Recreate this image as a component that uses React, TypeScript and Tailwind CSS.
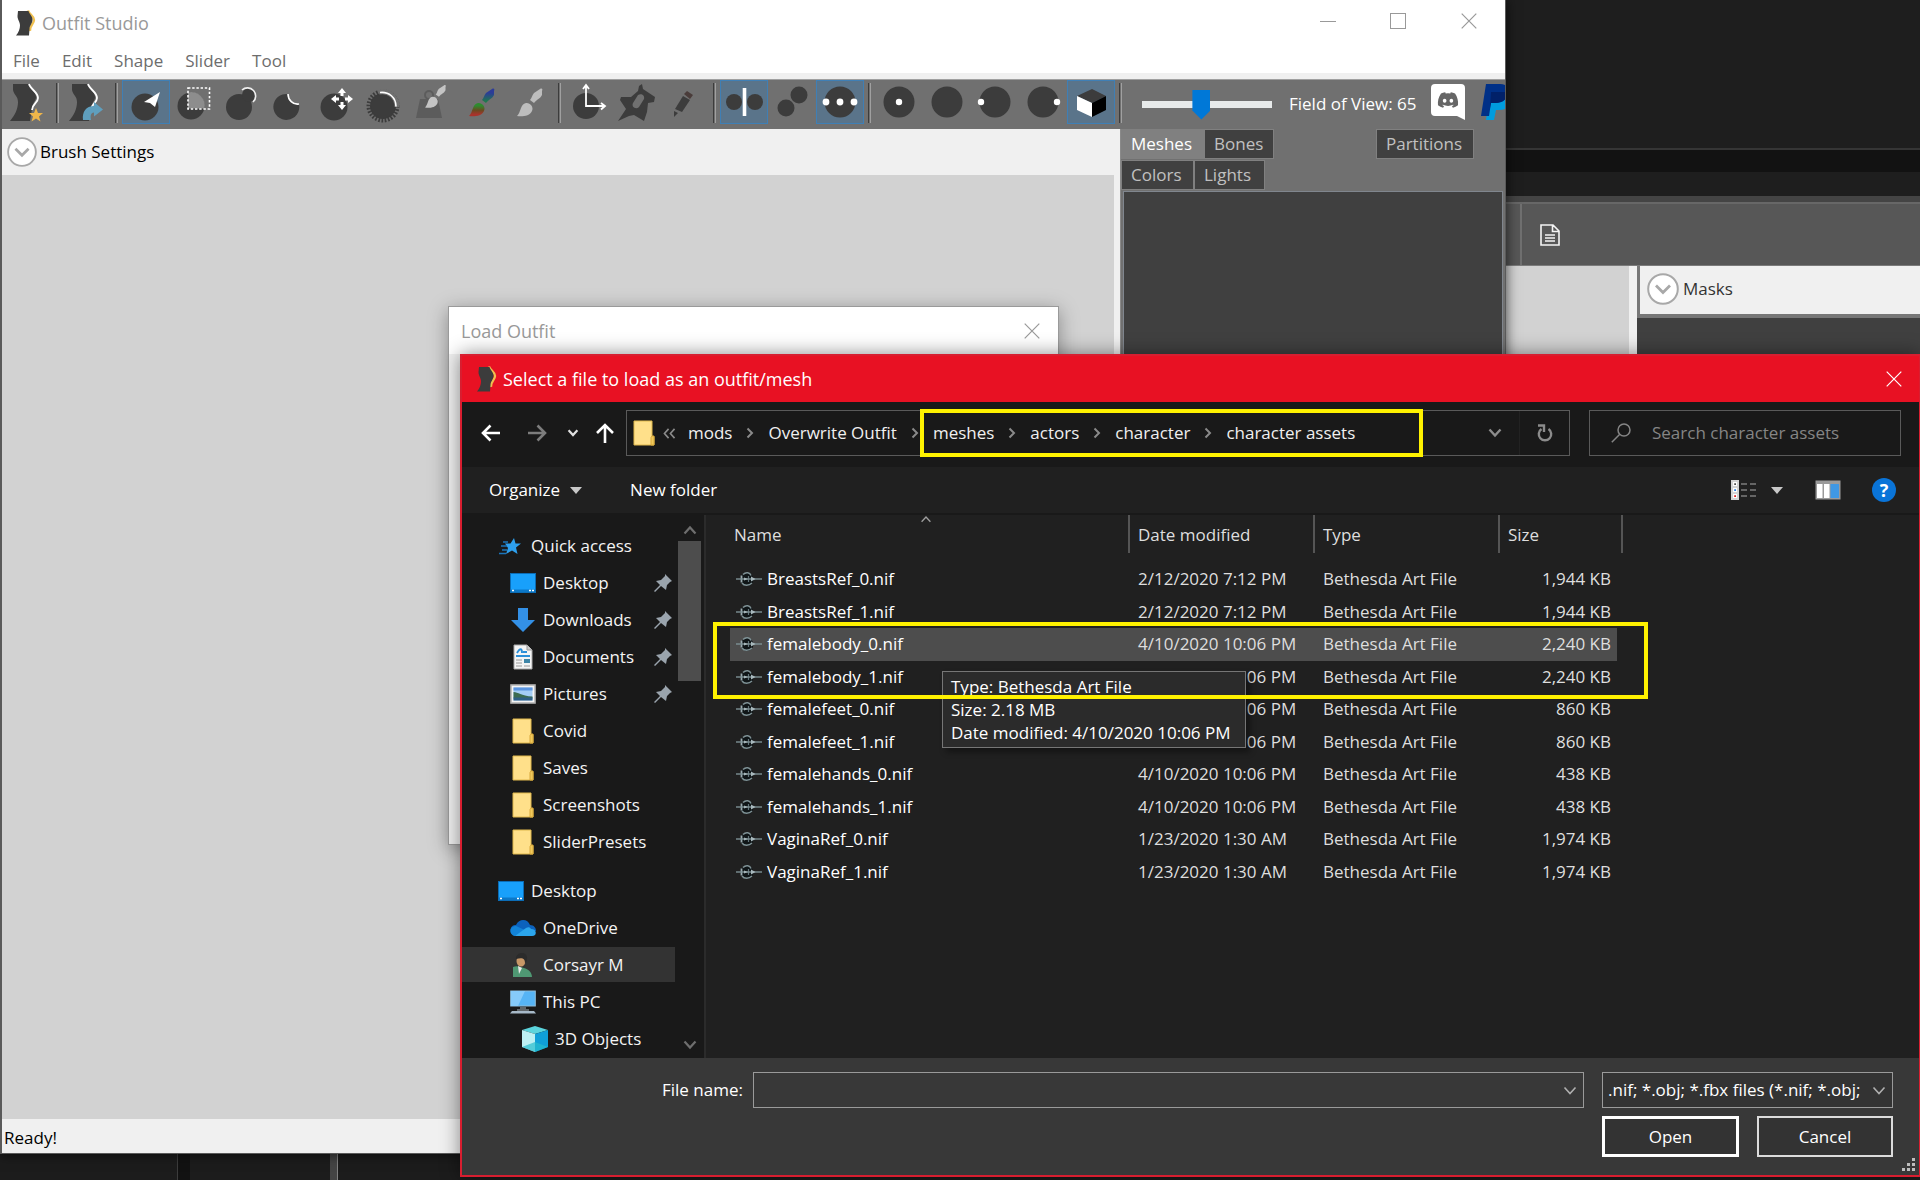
import type { ReactNode } from "react";
import { FaDiscord } from "react-icons/fa";

type IconProps = { className?: string };

/* ---------- shared glyphs ---------- */

function Chevron({ className = "" }: IconProps) {
  return (
    <svg viewBox="0 0 14 10" className={className} fill="none" stroke="currentColor">
      <path d="M1.5 1.5 7 7.5l5.5-6" />
    </svg>
  );
}

function CrumbArrow() {
  return (
    <svg viewBox="0 0 8 12" className="h-3 w-9 text-[#8a8a8a]" fill="none" stroke="currentColor" strokeWidth="2">
      <path d="M1.5 1.5 6 6l-4.5 4.5" />
    </svg>
  );
}

function CloseGlyph() {
  return (
    <svg viewBox="0 0 16 16" className="h-4 w-4" fill="none" stroke="currentColor" strokeWidth="1.2">
      <path d="M.7.7l14.6 14.6M15.3.7.7 15.3" />
    </svg>
  );
}

function BodyLogo() {
  return (
    <svg viewBox="0 0 20 26" className="h-[26px] w-5">
      <path d="M12 .5c1 4 6 5.500 6 9.500s-5 6-4 11" fill="none" stroke="#f0c050" strokeWidth="2.400" />
      <path d="M2 1h10.500c1 3.500 4 5 4 8.500 0 4-3 6-3 9.500l-.5 6.500H0c2.500-3 4-6.500 4-10C4 11.500 1.500 10 1.500 6z" fill="#3c3c3c" />
    </svg>
  );
}

function Folder({ className = "" }: IconProps) {
  return (
    <svg viewBox="0 0 22 26" className={className}>
      <path d="M1 1h18v15.500h2V25H1z" fill="#ffe08a" stroke="#e0b84c" />
      <path d="M18 25v-7.500l1-1.500h2v9z" fill="#f0c95c" stroke="#d9a93a" />
    </svg>
  );
}

function Disclosure({ className = "" }: IconProps) {
  return (
    <svg viewBox="0 0 32 32" className={className} fill="none">
      <circle cx="16" cy="16" r="14.800" fill="#fff" stroke="#a8a8a8" strokeWidth="2" />
      <path d="m9 12.500 7 7 7-7" stroke="#a8a8a8" strokeWidth="2.800" />
    </svg>
  );
}

/* ---------- toolbar drawings, all on a 48x44 box ---------- */

const INK = "#3c3c3c";

const torso = (
  <g>
    <path d="M9 4h16c1 5 7 7 7 13 0 4-4 6-4 12l-2 12H6c5-6 8-12 8-19 0-6-4-7-5-12z" fill={INK} />
    <path d="M25 4c1 5 9 8 9 14 0 5-6 6-6 12" fill="none" stroke="#fff" strokeWidth="1.800" />
  </g>
);

const brush = (tip: string, handle: string) => (
  <g>
    <path d="M11 36c4-3 3-12 9-13 4-.5 8 4 6 8-2 5-10 6-15 5z" fill={tip} />
    <path d="M24 20c2-2 2-5 4-7l6-4c2-1 3 0 2 2v4c-2 4-5 4-8 8z" fill={handle} />
  </g>
);

const drawings: Record<string, ReactNode> = {
  newProject: (
    <>
      {torso}
      <path d="m32 28 2 5h5l-4 3.500 1.500 5L32 38.500l-4.500 3 1.500-5-4-3.500h5z" fill="#efb64a" />
    </>
  ),
  loadProject: (
    <>
      {torso}
      <path d="M20 40c-1-8 3-14 11-14v-4l9 7.500-9 7v-4c-3 0-4 3-3 7.500z" fill="#5f9fbe" />
    </>
  ),
  select: (
    <>
      <circle cx="23" cy="27" r="13.500" fill={INK} />
      <path d="m38 12-5 15-5-4-6-1z" fill="#fff" />
    </>
  ),
  mask: (
    <>
      <circle cx="21" cy="26" r="13.500" fill={INK} />
      <path d="M18 12.500a13.500 13.500 0 0 1 16.500 16H18z" fill="#8d8d8d" />
      <rect x="18" y="8" width="21.500" height="21" fill="none" stroke="#fff" strokeWidth="1.600" strokeDasharray="2.400 1.800" />
    </>
  ),
  inflate: (
    <>
      <circle cx="21" cy="27" r="13" fill={INK} />
      <circle cx="31" cy="15" r="7" fill={INK} />
      <path d="M24 10a8 8 0 1 1 11 12" fill="none" stroke="#eee" strokeWidth="1.600" />
    </>
  ),
  deflate: (
    <>
      <path d="M22 14a13 13 0 1 0 11 10c-6 1-11-4-11-10z" fill={INK} />
      <path d="M22 14c0 6 5 11 11 10" fill="none" stroke="#fff" strokeWidth="1.600" />
    </>
  ),
  move: (
    <>
      <circle cx="20" cy="27" r="13.500" fill={INK} />
      <path d="m28 8 4 5h-2.500v3h-3v-3H24zM28 30l-4-5h2.500v-3h3v3H32zM17 19l5-4v2.500h3v3h-3V23zM39 19l-5-4v2.500h-3v3h3V23z" fill="#fff" />
    </>
  ),
  smooth: (
    <>
      <circle cx="21" cy="26" r="13" fill={INK} />
      <circle cx="21" cy="26" r="14" fill="none" stroke={INK} strokeWidth="5" strokeDasharray="1.600 1.500" />
      <path d="M17 12c10-2 18 5 18 15" fill="none" stroke="#707070" strokeWidth="5" />
      <path d="M18 12.500c9-1 16 5 16 14" fill="none" stroke="#fff" strokeWidth="1.600" />
    </>
  ),
  weight: (
    <>
      <circle cx="19" cy="15" r="4" fill="none" stroke="#5c5c5c" strokeWidth="2" />
      <path d="M10 19h18l4 19H6z" fill="#5c5c5c" />
      <g transform="translate(6 -2) scale(.82)">{brush("#c4c4c4", "#c4c4c4")}</g>
    </>
  ),
  color: (
    <>
      <defs>
        <linearGradient id="paint-tip" x1="0" y1="1" x2="0" y2="0">
          <stop offset=".15" stopColor="#a8332c" />
          <stop offset=".45" stopColor="#6a4a20" />
          <stop offset=".8" stopColor="#2e8b2e" />
        </linearGradient>
        <linearGradient id="paint-handle" x1="0" y1="1" x2="0" y2="0">
          <stop offset=".1" stopColor="#1f7a4c" />
          <stop offset=".7" stopColor="#2c3c98" />
        </linearGradient>
      </defs>
      {brush("url(#paint-tip)", "url(#paint-handle)")}
    </>
  ),
  alpha: brush("#bdbdbd", "#bdbdbd"),
  transform: (
    <>
      <circle cx="21" cy="26" r="13" fill={INK} />
      <path d="M21 6v20h18M18 9l3-4 3 4M36 23l4 3-4 3.500" fill="none" stroke="#fff" strokeWidth="1.800" />
    </>
  ),
  pivot: (
    <>
      <path d="m29 4 1 5 12 8-1 5-6 1-1 9-3 9-10-6-5 1-11 5 8-12-6-9 1-3h10l7-6 1-5z" fill={INK} />
      <path d="m20 23 5-8c3-2 7 0 6 4l-5 8c-3 3-8 0-6-4z" fill="#707070" />
    </>
  ),
  vertex: (
    <>
      <path d="m14 29 8-13 7 4-8 12z" fill={INK} />
      <path d="m23 14 3-3 6 4-3 4z" fill="#4a3c3a" />
      <path d="m13 31 4 2-4 4z" fill={INK} />
    </>
  ),
  mirror: (
    <>
      <circle cx="14" cy="22" r="8" fill={INK} />
      <circle cx="35" cy="22" r="8" fill={INK} />
      <path d="M24.500 8v28" stroke="#fff" strokeWidth="3.600" />
    </>
  ),
  connected: (
    <>
      <circle cx="18" cy="28" r="8.500" fill={INK} />
      <circle cx="31" cy="15" r="8.500" fill={INK} />
    </>
  ),
  global: (
    <>
      <circle cx="24" cy="22" r="15.500" fill={INK} />
      <circle cx="10" cy="22" r="3.400" fill="#fff" />
      <circle cx="24" cy="22" r="3.400" fill="#fff" />
      <circle cx="38" cy="22" r="3.400" fill="#fff" />
    </>
  ),
  centre: (
    <>
      <circle cx="24" cy="22" r="15.500" fill={INK} />
      <circle cx="24" cy="22" r="3.200" fill="#fff" />
    </>
  ),
  plain: <circle cx="24" cy="22" r="15.500" fill={INK} />,
  left: (
    <>
      <circle cx="24" cy="22" r="15.500" fill={INK} />
      <circle cx="10" cy="22" r="3.200" fill="#fff" />
    </>
  ),
  right: (
    <>
      <circle cx="24" cy="22" r="15.500" fill={INK} />
      <circle cx="38" cy="22" r="3.200" fill="#fff" />
    </>
  ),
  cube: (
    <>
      <path d="m10 16 15-7 14 7-14 7z" fill={INK} />
      <path d="m10 16 15 7v14l-15-7z" fill="#fff" />
      <path d="m25 23 14-7v14l-14 7z" fill="#000" />
    </>
  ),
};

const toolGroups = [
  ["newProject"],
  ["loadProject"],
  ["select", "mask", "inflate", "deflate", "move", "smooth", "weight", "color", "alpha"],
  ["transform", "pivot", "vertex"],
  ["mirror", "connected", "global"],
  ["centre", "plain", "left", "right", "cube"],
];

const activeTools = ["select", "mirror", "global", "cube"];

function ToolButton({ name }: { name: string }) {
  const active = activeTools.includes(name);
  return (
    <button
      type="button"
      aria-label={name}
      className={`h-11 w-12 shrink-0 border ${active ? "border-[#3f7fb5] bg-[#5a748a]" : "border-transparent"}`}
    >
      <svg viewBox="1 1 46 42" className="h-full w-full">
        {drawings[name]}
      </svg>
    </button>
  );
}

function PayPal() {
  return (
    <svg viewBox="0 0 32 36" className="h-9 w-8 shrink-0">
      <path d="M9 8h16c5 1 6 6 5 10-2 6-6 8-12 8h-3l-2 10H5z" fill="#009cde" />
      <path d="M5 0h14c7 0 10 4 8 10-2 7-7 9-13 9h-4L8 32H0z" fill="#003087" />
      <path d="M10 8h16c1 7-5 11-12 11h-4l-1 5z" fill="#012169" />
    </svg>
  );
}

/* ---------- Outfit Studio window ---------- */

function Tab({ label, className }: { label: string; className: string }) {
  return (
    <button type="button" className={`h-[30px] border border-[#808080] px-[9px] text-left ${className}`}>
      {label}
    </button>
  );
}

function StudioWindow() {
  return (
    <section className="absolute bottom-[26px] left-0 right-[414px] top-0 flex flex-col overflow-hidden border-b border-l-2 border-r border-[#5a5a5a] bg-[#f0f0f0] shadow-[0_0_12px_rgba(0,0,0,0.7)]">
      <header className="flex h-[45px] shrink-0 items-center bg-white pl-[14px] text-lg text-[#999]">
        <BodyLogo />
        <h1 className="ml-[6px]">Outfit Studio</h1>
        <div className="ml-auto flex self-start text-[#999]">
          <button type="button" aria-label="Minimize" className="flex h-[42px] w-[70px] items-center justify-center">
            <span className="h-px w-4 bg-current" />
          </button>
          <button type="button" aria-label="Maximize" className="flex h-[42px] w-[70px] items-center justify-center">
            <span className="h-4 w-4 border border-current" />
          </button>
          <button type="button" aria-label="Close" className="flex h-[42px] w-[72px] items-center justify-center">
            <CloseGlyph />
          </button>
        </div>
      </header>
      <nav className="flex h-7 shrink-0 items-end gap-[22px] bg-white pl-[11px] text-[#6d6d6d]">
        {["File", "Edit", "Shape", "Slider", "Tool"].map((item) => (
          <button key={item} type="button">
            {item}
          </button>
        ))}
      </nav>
      <div className="h-[7px] shrink-0 border-b border-[#a0a0a0] bg-[#f0f0f0]" />

      <div className="flex h-[49px] shrink-0 items-start overflow-hidden bg-[#707070] pl-[2px]">
        {toolGroups.map((group, i) => (
          <div key={i} className="flex shrink-0">
            {group.map((name) => (
              <ToolButton key={name} name={name} />
            ))}
            <span className="flex w-[11px] justify-center pt-[3px]">
              <span className="h-10 w-[3px] border-l border-r border-l-[#3c3c3c] border-r-[#a0a0a0]" />
            </span>
          </div>
        ))}
        <label className="ml-4 flex h-[48px] shrink-0 items-center text-white">
          <input
            type="range"
            min={20}
            max={120}
            defaultValue={65}
            className="mr-[17px] h-[30px] w-[130px] appearance-none bg-transparent [&::-webkit-slider-runnable-track]:h-[7px] [&::-webkit-slider-runnable-track]:bg-[#e7eaea] [&::-webkit-slider-thumb]:-mt-[11px] [&::-webkit-slider-thumb]:h-[30px] [&::-webkit-slider-thumb]:w-[18px] [&::-webkit-slider-thumb]:appearance-none [&::-webkit-slider-thumb]:bg-[#0078d7] [&::-webkit-slider-thumb]:[clip-path:polygon(0_0,100%_0,100%_70%,50%_100%,0_70%)]"
          />
          Field of View: 65
        </label>
        <button type="button" aria-label="Discord" className="relative ml-[14px] mt-1 h-9 w-[34px] shrink-0 text-[#666]">
          <svg viewBox="0 0 34 36" className="absolute inset-0 h-9 w-[34px]">
            <path d="M4 0h26q4 0 4 4v32l-8-4H4q-4 0-4-4V4q0-4 4-4z" fill="#fff" />
          </svg>
          <FaDiscord className="relative mx-auto -mt-1 h-[22px] w-[22px]" />
        </button>
        <button type="button" aria-label="PayPal" className="ml-4 mt-1 shrink-0">
          <PayPal />
        </button>
      </div>

      <div className="flex min-h-0 flex-1">
        <div className="flex min-w-0 flex-1 flex-col">
          <button type="button" className="flex h-[46px] shrink-0 items-center gap-[3px] pl-[5px] text-black">
            <Disclosure className="h-[30px] w-[30px]" />
            Brush Settings
          </button>
          <div className="mr-[6px] flex-1 bg-[#d2d2d2]" />
        </div>
        <aside className="flex w-[385px] shrink-0 flex-col border-l border-[#8a8a8a] bg-[#707070] pr-[2px] text-[#c0c0c0]">
          <div className="flex">
            <Tab label="Meshes" className="w-[83px] bg-[#808080] text-white" />
            <Tab label="Bones" className="w-[70px] bg-[#404040]" />
            <Tab label="Partitions" className="ml-auto mr-[29px] w-[98px] bg-[#404040]" />
          </div>
          <div className="mt-px flex">
            <Tab label="Colors" className="w-[73px] bg-[#404040]" />
            <Tab label="Lights" className="w-[71px] bg-[#404040]" />
          </div>
          <div className="ml-[2px] mt-px flex-1 border border-[#80868e] bg-[#404040]" />
        </aside>
      </div>
      <footer className="flex h-[34px] shrink-0 items-end pb-[3px] pl-[2px] text-black">Ready!</footer>
    </section>
  );
}

/* ---------- windows further back ---------- */

function Backdrop() {
  return (
    <div className="absolute inset-0 flex flex-col bg-[#1e1e1e]">
      <div className="flex h-[266px] flex-col pl-[1506px]">
        <div className="h-[148px]" />
        <div className="h-[24px] border-t-2 border-[#353535] bg-[#121212]" />
        <div className="h-[24px]" />
        <div className="h-[6px] bg-[#444]" />
        <div className="flex flex-1 border-b border-t-2 border-b-[#7b7b7b] border-t-[#676767] bg-[#575757] pl-[14px]">
          <div className="flex items-center border-l-2 border-[#707070] pl-[18px]">
            <svg viewBox="0 0 20 22" className="h-[22px] w-5" fill="none" stroke="#f4f4f4" strokeWidth="1.600">
              <path d="M1 1h12l6 6v14H1zM12.500 1v6.500H19M5 11h10M5 14h10M5 17h10" />
            </svg>
          </div>
        </div>
      </div>
      <div className="flex min-h-0 flex-1 pl-[1506px]">
        <div className="w-[131px] border-r-8 border-[#f0f0f0] bg-[#d2d2d2]" />
        <div className="flex-1 bg-[#404040]">
          <div className="flex h-[52px] items-center gap-1 border-b-4 border-l-[3px] border-[#777] bg-[#f0f0f0] pb-[2px] pl-[7px] text-[#333]">
            <Disclosure className="h-8 w-8" />
            Masks
          </div>
        </div>
      </div>
      <div className="flex h-[26px] bg-[#1c1c1c]">
        <div className="w-[178px] border-r border-[#3c3c3c]" />
        <div className="w-3 bg-[#121212]" />
        <div className="w-[140px]" />
        <div className="w-2 border-r border-r-[#808080] bg-[#444]" />
      </div>
    </div>
  );
}

function LoadOutfitWindow() {
  return (
    <section className="absolute bottom-[335px] left-[448px] right-[861px] top-[306px] border border-[#9a9a9a] bg-[#f0f0f0] shadow-[0_4px_18px_rgba(0,0,0,0.35)]">
      <header className="flex h-[47px] items-center justify-between bg-white pl-3 pr-[18px] text-lg text-[#999]">
        <h2>Load Outfit</h2>
        <button type="button" aria-label="Close">
          <CloseGlyph />
        </button>
      </header>
    </section>
  );
}

/* ---------- file dialog ---------- */

const placeIcons: Record<string, ReactNode> = {
  star: (
    <svg viewBox="0 0 24 20" className="h-5 w-6">
      <path d="m15 2 1.500 5.500H22l-5 4 1.500 6.500-5.500-3.500L7 18l2-6-3-4.500h5.500z" fill="#2ea0ee" />
      <path d="M4 6h5M2 10h6M0 17.500h7M3 14h5" stroke="#1b75bb" strokeWidth="1.400" />
    </svg>
  ),
  desktop: (
    <svg viewBox="0 0 26 20" className="h-5 w-[26px]">
      <rect x=".5" y=".5" width="25" height="19" fill="#18a0fb" stroke="#0b6cb5" />
      <path d="M1 16.500h24V19H1z" fill="#0b78c8" />
      <path d="M2 17.500h2M19 17.500h2M22 17.500h2" stroke="#fff" strokeWidth="1.400" />
    </svg>
  ),
  download: (
    <svg viewBox="0 0 26 26" className="h-[26px] w-[26px]">
      <path d="M8 1h10v12h7L13 25 1 13h7z" fill="#3390e6" />
    </svg>
  ),
  document: (
    <svg viewBox="0 0 26 26" className="h-[26px] w-[26px]">
      <path d="M4 1h13l5 5v19H4z" fill="#f5f5f5" stroke="#a8a8a8" />
      <path d="M17 1v5h5" fill="#ccc" stroke="#999" />
      <path d="M7 9c3-5 5-5 5 0M13 8h4M6 12h14" stroke="#2c8fd8" strokeWidth="2" fill="none" />
      <path d="M6 16h6M6 19h6M6 22h6M14 22h6" stroke="#9a9a9a" />
      <path d="M14 15h6v4h-6z" fill="#3f86a8" />
    </svg>
  ),
  picture: (
    <svg viewBox="0 0 26 20" className="h-5 w-[26px]">
      <rect x="1" y="1" width="24" height="18" fill="#f4f4f4" stroke="#b5b5b5" strokeWidth="1.600" />
      <path d="M3.500 3.500h19v13h-19z" fill="#a4cdf5" />
      <path d="M3.500 3.500h19v3h-19z" fill="#5b95e0" />
      <path d="M3.500 8c5 0 7 4 19 4.500v2h-19z" fill="#3c6b50" />
      <path d="M3.500 13.500h19v3h-19z" fill="#2f5f86" />
    </svg>
  ),
  folder: <Folder className="h-[26px] w-[22px]" />,
  cloud: (
    <svg viewBox="0 0 26 18" className="h-[18px] w-[26px]">
      <path d="M5 16a5 5 0 0 1 1-10C9-1 18-.5 20 6c4 0 6 3 6 6H6z" fill="#0c62bd" />
      <path d="M4 17c-6-3-4-10 2-10l11 5 8 4z" fill="#1283d8" />
      <path d="M5 17 16 9c2-1 4-1 5 1 4 0 6 3 4 6q-1 1-3 1z" fill="#2ba5ec" />
    </svg>
  ),
  user: (
    <svg viewBox="0 0 26 26" className="h-[26px] w-[26px]">
      <path d="M3 25V15c4-2 8 0 11 1 4 1 8 4 8 9z" fill="#4f9873" />
      <path d="m8 14 4 2-3 6z" fill="#e8e8e8" />
      <ellipse cx="11" cy="9" rx="4.500" ry="5.500" fill="#c89868" />
      <path d="M6 7c-1-7 12-9 11 0 0 2-1 4-2 4 0-4-2-6-9-4z" fill="#2b2b2b" />
    </svg>
  ),
  pc: (
    <svg viewBox="0 0 26 24" className="h-6 w-[26px]">
      <rect x=".7" y="1" width="24.600" height="15" fill="#56b4f5" stroke="#8fbcd8" />
      <path d="M1 1h14L8 16H1z" fill="#86cbfa" />
      <path d="M10 18h6M7 20h12" stroke="#a8b4bc" />
      <path d="M2 21h22l2 2.500H0z" fill="#a7b9c8" />
    </svg>
  ),
  cube: (
    <svg viewBox="0 0 26 26" className="h-[26px] w-[26px]">
      <path d="M0 4 13 0l13 4-13 4z" fill="#5bd4dc" />
      <path d="m0 4 13 4v18L0 21z" fill="#bdf0f3" />
      <path d="M26 4 13 8v18l13-5z" fill="#0f9fd8" />
      <path d="m0 21 13-5v10zM26 21l-13-5v10z" fill="#27bccd" fillOpacity=".7" />
    </svg>
  ),
};

const places = [
  { label: "Quick access", icon: "star", indent: "pl-[36px]" },
  { label: "Desktop", icon: "desktop", indent: "pl-[48px]", pinned: true },
  { label: "Downloads", icon: "download", indent: "pl-[48px]", pinned: true },
  { label: "Documents", icon: "document", indent: "pl-[48px]", pinned: true },
  { label: "Pictures", icon: "picture", indent: "pl-[48px]", pinned: true },
  { label: "Covid", icon: "folder", indent: "pl-[48px]" },
  { label: "Saves", icon: "folder", indent: "pl-[48px]" },
  { label: "Screenshots", icon: "folder", indent: "pl-[48px]" },
  { label: "SliderPresets", icon: "folder", indent: "pl-[48px]" },
  { label: "Desktop", icon: "desktop", indent: "pl-[36px]", root: true },
  { label: "OneDrive", icon: "cloud", indent: "pl-[48px]" },
  { label: "Corsayr M", icon: "user", indent: "pl-[48px]", selected: true },
  { label: "This PC", icon: "pc", indent: "pl-[48px]" },
  { label: "3D Objects", icon: "cube", indent: "pl-[60px]" },
];

const files = [
  ["BreastsRef_0.nif", "2/12/2020 7:12 PM", "1,944 KB"],
  ["BreastsRef_1.nif", "2/12/2020 7:12 PM", "1,944 KB"],
  ["femalebody_0.nif", "4/10/2020 10:06 PM", "2,240 KB"],
  ["femalebody_1.nif", "4/10/2020 10:06 PM", "2,240 KB"],
  ["femalefeet_0.nif", "4/10/2020 10:06 PM", "860 KB"],
  ["femalefeet_1.nif", "4/10/2020 10:06 PM", "860 KB"],
  ["femalehands_0.nif", "4/10/2020 10:06 PM", "438 KB"],
  ["femalehands_1.nif", "4/10/2020 10:06 PM", "438 KB"],
  ["VaginaRef_0.nif", "1/23/2020 1:30 AM", "1,974 KB"],
  ["VaginaRef_1.nif", "1/23/2020 1:30 AM", "1,974 KB"],
];

const HOVERED = "femalebody_0.nif";

const crumbs = ["mods", "Overwrite Outfit", "meshes", "actors", "character", "character assets"];

function PinIcon() {
  return (
    <svg viewBox="0 0 18 18" className="ml-auto mr-[3px] h-[18px] w-[18px]" fill="#9aa4ad">
      <path d="m11 0 7 7-2 1-3 3-1 5-5-4-6 6-1-1 6-6-4-4 5-1 4-4z" />
    </svg>
  );
}

function NifIcon() {
  return (
    <svg viewBox="0 0 26 18" className="h-[18px] w-[26px] shrink-0" fill="none">
      <ellipse cx="11" cy="9.500" rx="6.500" ry="6.500" fill="#0f1517" />
      <path d="M7 4.500c3-3 7-2 8 1M6 13c2 3 7 3 10 0" stroke="#7f9296" strokeWidth="1.400" />
      <path d="M5.500 5.500v7" stroke="#9aabb0" strokeWidth="1.800" />
      <path d="M12.500 6v6" stroke="#62757a" strokeWidth="1.200" />
      <path d="M0 9h26" stroke="#7d9196" strokeWidth="1.400" />
      <path d="m15 6.500 4.500 2.500-4.500 2.500zM8 7.500l4 1.500-4 1.500z" fill="#a8b8bc" />
    </svg>
  );
}

function AddressBar() {
  return (
    <div className="flex h-[65px] shrink-0 items-center bg-[#191919] pb-[3px] pl-[19px] pr-[18px]">
      <button type="button" aria-label="Back" className="w-5 text-white">
        <svg viewBox="0 0 20 18" className="h-[18px] w-5" fill="none" stroke="currentColor" strokeWidth="2.600">
          <path d="M19 9H2M9.500 1.500 2 9l7.500 7.500" />
        </svg>
      </button>
      <button type="button" aria-label="Forward" className="ml-[26px] w-5 text-[#7d7d7d]">
        <svg viewBox="0 0 20 18" className="h-[18px] w-5" fill="none" stroke="currentColor" strokeWidth="2.600">
          <path d="M1 9h17M10.500 1.500 18 9l-7.500 7.500" />
        </svg>
      </button>
      <button type="button" aria-label="Recent locations" className="ml-5 w-3 text-[#e0e0e0]">
        <Chevron className="h-2 w-3 stroke-[2.800]" />
      </button>
      <button type="button" aria-label="Up" className="ml-4 w-5 text-white">
        <svg viewBox="0 0 20 20" className="h-5 w-5" fill="none" stroke="currentColor" strokeWidth="2.600">
          <path d="M10 20V2M2 10l8-8 8 8" />
        </svg>
      </button>

      <div className="relative ml-[11px] flex h-[46px] min-w-0 flex-1 items-center border border-[#5a5a5a] pl-[6px] text-[#f0f0f0]">
        <Folder className="h-[26px] w-[22px]" />
        <svg viewBox="0 0 14 12" className="ml-2 mr-3 h-[11px] w-[13px]" fill="none" stroke="#8a8a8a" strokeWidth="1.800">
          <path d="M6 1 1.500 6 6 11M12.500 1 8 6l4.500 5" />
        </svg>
        {crumbs.map((crumb, i) => (
          <span key={crumb} className="flex shrink-0 items-center">
            {i > 0 && <CrumbArrow />}
            <button type="button">{crumb}</button>
          </span>
        ))}
        <div className="ml-auto flex h-full text-[#8c8c8c]">
          <button type="button" aria-label="Previous locations" className="w-12">
            <Chevron className="mx-auto h-[10px] w-[14px] stroke-[2.400]" />
          </button>
          <button type="button" aria-label="Refresh" className="w-[50px] border-l border-[#222]">
            <svg viewBox="0 0 16 18" className="mx-auto h-[18px] w-4" fill="none" stroke="currentColor" strokeWidth="2.400">
              <path d="M11.500 5a6.200 6.200 0 1 1-7 0M1 1.500h6V8" />
            </svg>
          </button>
        </div>
        <span className="pointer-events-none absolute -inset-y-[2px] left-[293px] w-[503px] border-4 border-[#fff200]" />
      </div>

      <label className="ml-[19px] flex h-[46px] w-[312px] shrink-0 items-center border border-[#5a5a5a] pl-[21px] text-[#858585]">
        <svg viewBox="0 0 20 20" className="h-5 w-5 shrink-0" fill="none" stroke="currentColor" strokeWidth="1.500">
          <circle cx="13" cy="7" r="6" />
          <path d="M8.800 11.200.8 19.200" />
        </svg>
        <input
          type="search"
          aria-label="Search"
          placeholder="Search character assets"
          className="ml-[21px] min-w-0 flex-1 bg-transparent outline-none placeholder:text-[#858585]"
        />
      </label>
    </div>
  );
}

function CommandBar() {
  return (
    <div className="flex h-12 shrink-0 items-center border-b-2 border-[#191919] bg-[#202020] pl-[27px] pr-[23px] text-white">
      <button type="button" className="flex items-center gap-[10px]">
        Organize
        <svg viewBox="0 0 12 7" className="h-[7px] w-3" fill="#c8c8c8">
          <path d="M0 0h12L6 7z" />
        </svg>
      </button>
      <button type="button" className="ml-12">
        New folder
      </button>
      <button type="button" aria-label="View" className="ml-auto flex items-center gap-[14px]">
        <svg viewBox="0 0 26 20" className="h-5 w-[26px]">
          <path d="M0 0h8v20H0z" fill="#d5d5d5" />
          <path d="M2 2h4v4H2zM2 8h4v4H2zM2 14h4v4H2z" fill="#fff" />
          <path d="M3.200 3.200h1.800v1.800H3.200z" fill="#555" />
          <path d="M3.200 9.200h1.800v1.800H3.200z" fill="#2d7ee0" />
          <path d="M3.200 15.200h1.800v1.800H3.200z" fill="#d22" />
          <path d="M10 4h6M19 4h6M10 10h6M19 10h6M10 16h6M19 16h6" stroke="#7c7c7c" strokeWidth="1.400" />
        </svg>
        <svg viewBox="0 0 12 7" className="h-[7px] w-3" fill="#c8c8c8">
          <path d="M0 0h12L6 7z" />
        </svg>
      </button>
      <button type="button" aria-label="Preview pane" className="ml-8">
        <svg viewBox="0 0 26 20" className="h-5 w-[26px]">
          <path d="M.5.500h25v19H.5z" fill="#9a9a9a" />
          <path d="M2 4h5.500v14H2zM9 4h5.500v14H9z" fill="#fff" />
          <path d="M15.500 4H24v14h-8.500z" fill="#3f98e4" />
        </svg>
      </button>
      <button
        type="button"
        aria-label="Help"
        className="ml-[31px] h-6 w-6 rounded-full bg-[#0a74d8] text-lg font-bold leading-6"
      >
        ?
      </button>
    </div>
  );
}

function Sidebar() {
  return (
    <aside className="flex w-[244px] shrink-0 border-r-2 border-[#2b2b2b] bg-[#191919] text-[#f4f4f4]">
      <ul className="min-w-0 flex-1 overflow-hidden pt-3">
        {places.map((place, i) => (
          <li key={i} className={`py-px ${place.root ? "mt-3" : ""}`}>
            <button
              type="button"
              className={`flex h-[35px] w-full items-center ${place.indent} ${place.selected ? "bg-[#333]" : ""}`}
            >
              <span className="mr-[7px] flex w-[26px] justify-center">{placeIcons[place.icon]}</span>
              {place.label}
              {place.pinned && <PinIcon />}
            </button>
          </li>
        ))}
      </ul>
      <div className="flex w-[29px] flex-col items-center pb-2 pt-[10px] text-[#6e6e6e]">
        <Chevron className="h-[10px] w-[14px] rotate-180 stroke-[2.200]" />
        <div className="mt-[6px] h-[140px] w-[23px] bg-[#4d4d4d]" />
        <Chevron className="mt-auto h-[10px] w-[14px] stroke-[2.200]" />
      </div>
    </aside>
  );
}

function FileList() {
  return (
    <div className="relative min-w-0 flex-1 bg-[#202020]">
      <table className="ml-6 h-[373px] w-[893px] table-fixed border-separate border-spacing-0 text-left text-[#dedede]">
        <colgroup>
          <col className="w-[400px]" />
          <col className="w-[185px]" />
          <col className="w-[185px]" />
          <col className="w-[123px]" />
        </colgroup>
        <thead>
          <tr className="h-12 align-top">
            {["Name", "Date modified", "Type", "Size"].map((label, i) => (
              <th key={label} className="p-0 font-normal">
                <div className={`h-[38px] border-r-2 border-[#555] leading-[40px] ${i === 0 ? "pl-1" : "pl-2"}`}>{label}</div>
              </th>
            ))}
          </tr>
        </thead>
        <tbody>
          {files.map(([name, modified, size]) => (
            <tr key={name} className={name === HOVERED ? "bg-[#4d4d4d]" : ""}>
              <td className="p-0">
                <div className="flex items-center gap-[5px] pl-[6px] leading-6 text-white">
                  <NifIcon />
                  {name}
                </div>
              </td>
              <td className="p-0 pl-2 leading-6">{modified}</td>
              <td className="p-0 pl-2 leading-6">Bethesda Art File</td>
              <td className="border-r-[6px] border-[#202020] p-0 pr-[6px] text-right leading-6">{size}</td>
            </tr>
          ))}
        </tbody>
      </table>
      <Chevron className="absolute left-[214px] top-0 h-2 w-3 rotate-180 stroke-[1.600] text-[#a0a0a0]" />

      <div
        role="tooltip"
        className="absolute left-[236px] top-[156px] w-[304px] border border-[#767676] bg-[#2b2b2b] py-[3px] pl-2 leading-[23px] text-white shadow-[4px_4px_6px_rgba(0,0,0,0.4)]"
      >
        <p>Type: Bethesda Art File</p>
        <p>Size: 2.18 MB</p>
        <p>Date modified: 4/10/2020 10:06 PM</p>
      </div>
      <span className="pointer-events-none absolute left-[7px] top-[107px] h-[77px] w-[935px] border-4 border-[#fff200]" />
    </div>
  );
}

function DialogFooter() {
  return (
    <div className="relative flex h-[117px] shrink-0 flex-col gap-2 bg-[#383838] pl-[200px] pr-[26px] pt-[14px] text-white">
      <div className="flex h-9 items-center">
        <label htmlFor="file-name">File name:</label>
        <div className="relative ml-[10px] min-w-0 flex-1">
          <input id="file-name" type="text" className="block h-9 w-full border border-[#9a9a9a] bg-[#383838] px-2 outline-none" />
          <Chevron className="absolute right-[7px] top-[14px] h-[10px] w-[14px] stroke-[1.600] text-[#b0b0b0]" />
        </div>
        <div className="relative ml-[18px] w-[291px]">
          <select aria-label="File type" className="block h-9 w-full appearance-none border border-[#9a9a9a] bg-[#333] pl-[5px] pr-7">
            <option>.nif; *.obj; *.fbx files (*.nif; *.obj;</option>
          </select>
          <Chevron className="pointer-events-none absolute right-[7px] top-[14px] h-[10px] w-[14px] stroke-[1.600] text-[#b0b0b0]" />
        </div>
      </div>
      <div className="flex justify-end gap-[18px]">
        <button type="button" className="h-[41px] w-[137px] border-[3px] border-white bg-[#333]">
          Open
        </button>
        <button type="button" className="h-[41px] w-[136px] border-2 border-[#dcdcdc] bg-[#333]">
          Cancel
        </button>
      </div>
      <svg viewBox="0 0 15 15" className="absolute bottom-[2px] right-[3px] h-[15px] w-[15px]" fill="#bdbdbd">
        <path d="M11 0h3v3h-3zM11 5h3v3h-3zM6 5h3v3H6zM11 10h3v3h-3zM6 10h3v3H6zM1 10h3v3H1z" />
      </svg>
    </div>
  );
}

function FileDialog() {
  return (
    <section className="absolute bottom-[3px] left-[460px] right-0 top-[354px] flex flex-col border-2 border-r border-[#d81e30] bg-[#202020] shadow-[0_0_18px_rgba(0,0,0,0.45)]">
      <header className="flex h-[46px] shrink-0 items-center bg-[#e81123] pl-[15px] pr-[17px] text-lg text-white">
        <BodyLogo />
        <h2 className="ml-[6px]">Select a file to load as an outfit/mesh</h2>
        <button type="button" aria-label="Close" className="ml-auto">
          <CloseGlyph />
        </button>
      </header>
      <AddressBar />
      <CommandBar />
      <div className="flex min-h-0 flex-1">
        <Sidebar />
        <FileList />
      </div>
      <DialogFooter />
    </section>
  );
}

export default function App() {
  return (
    <main className="relative min-h-screen w-full overflow-hidden whitespace-nowrap font-['Open_Sans',sans-serif] text-[17px] leading-6">
      <Backdrop />
      <StudioWindow />
      <LoadOutfitWindow />
      <FileDialog />
    </main>
  );
}
